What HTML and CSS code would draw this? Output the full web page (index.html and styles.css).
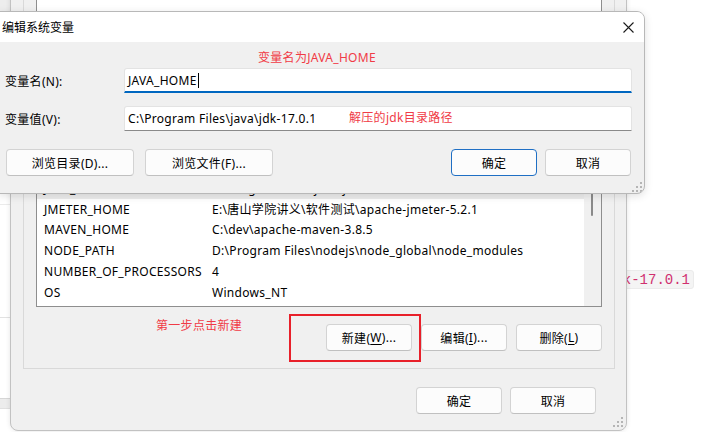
FILE: index.html
```html
<!DOCTYPE html>
<html lang="zh-CN">
<head>
<meta charset="utf-8">
<title>编辑系统变量</title>
<link rel="stylesheet" href="styles.css">
</head>
<body>
<div class="desk">
  <div class="side-win">
    <div class="sw sw-top"></div>
    <div class="sw sw-a"></div>
    <div class="sw sw-b"></div>
    <div class="sw sw-c"></div>
    <div class="sw sw-band"></div>
  </div>

  <code class="snippet">jdk-17.0.1</code>

  <div class="env-dlg">
    <div class="grp grp-user">
      <div class="lst lst-user"></div>
    </div>
    <div class="grp grp-sys">
      <div class="lst">
        <div class="rows">
          <div class="row first"></div>
          <div class="row sel"><span class="c1">JAVA_HOME</span><span class="c2">C:\Program Files\java\jdk-17.0.1</span></div>
          <div class="row"><span class="c1">JMETER_HOME</span><span class="c2">E:\唐山学院讲义\软件测试\apache-jmeter-5.2.1</span></div>
          <div class="row"><span class="c1">MAVEN_HOME</span><span class="c2">C:\dev\apache-maven-3.8.5</span></div>
          <div class="row"><span class="c1">NODE_PATH</span><span class="c2">D:\Program Files\nodejs\node_global\node_modules</span></div>
          <div class="row"><span class="c1">NUMBER_OF_PROCESSORS</span><span class="c2">4</span></div>
          <div class="row"><span class="c1">OS</span><span class="c2">Windows_NT</span></div>
        </div>
        <div class="vscroll"><div class="thumb"></div></div>
      </div>
      <div class="btnrow">
        <button class="btn btn-s">新建(<u>W</u>)...</button>
        <button class="btn btn-s">编辑(<u>I</u>)...</button>
        <button class="btn btn-s">删除(<u>L</u>)</button>
      </div>
    </div>
    <div class="footer">
      <button class="btn btn-s">确定</button>
      <button class="btn btn-s">取消</button>
    </div>
    <svg class="grip" width="10" height="10" viewBox="0 0 10 10"><g fill="#b5b5b5"><rect x="8" y="0" width="2" height="2"/><rect x="4" y="4" width="2" height="2"/><rect x="8" y="4" width="2" height="2"/><rect x="0" y="8" width="2" height="2"/><rect x="4" y="8" width="2" height="2"/><rect x="8" y="8" width="2" height="2"/></g></svg>
  </div>

  <div class="edit-dlg">
    <div class="titlebar">
      <span class="title">编辑系统变量</span>
      <svg class="close" width="11" height="11" viewBox="0 0 11 11"><path d="M0.5 0.5 L10.5 10.5 M10.5 0.5 L0.5 10.5" stroke="#1b1b1b" stroke-width="1.1" fill="none"/></svg>
    </div>
    <div class="body">
      <div class="field">
        <label class="lbl">变量名(N):</label>
        <div class="input focus"><span>JAVA_HOME</span><span class="caret"></span></div>
      </div>
      <div class="field">
        <label class="lbl">变量值(V):</label>
        <div class="input"><span>C:\Program Files\java\jdk-17.0.1</span></div>
      </div>
      <div class="actions">
        <div class="group">
          <button class="btn btn-w">浏览目录(D)...</button>
          <button class="btn btn-w">浏览文件(F)...</button>
        </div>
        <div class="group group-r">
          <button class="btn btn-s default">确定</button>
          <button class="btn btn-s">取消</button>
        </div>
      </div>
    </div>
    <svg class="grip grip-fg" width="10" height="10" viewBox="0 0 10 10"><g fill="#b5b5b5"><rect x="8" y="0" width="2" height="2"/><rect x="4" y="4" width="2" height="2"/><rect x="8" y="4" width="2" height="2"/><rect x="0" y="8" width="2" height="2"/><rect x="4" y="8" width="2" height="2"/><rect x="8" y="8" width="2" height="2"/></g></svg>
  </div>

  <div class="note note1">变量名为JAVA_HOME</div>
  <div class="note note2">解压的jdk目录路径</div>
  <div class="note note3">第一步点击新建</div>
  <div class="hl-box"></div>
</div>
</body>
</html>
```

FILE: styles.css
```css
* { box-sizing: border-box; margin: 0; padding: 0; }
html, body { width: 702px; height: 432px; overflow: hidden; background: #fff; }
body {
  font-family: "Noto Sans", "Noto Sans CJK SC", sans-serif;
  font-size: 12px;
  letter-spacing: 0.3px;
  color: #000;
}
.desk { position: relative; width: 702px; height: 432px; overflow: hidden; background: #fff; }

/* window peeking at the far left */
.side-win {
  position: absolute; left: -200px; top: 0; width: 210px; height: 432px;
  background: #fff; display: flex; flex-direction: column;
}
.sw { flex: none; border-bottom: 1px solid #dedede; }
.sw-top { height: 194px; background: #ededed; border-bottom-color: #cfcfcf; }
.sw-a { height: 11px; border-bottom-color: #ebebeb; }
.sw-b { height: 113px; border-bottom-color: #e2e2e2; }
.sw-c { height: 81px; border-bottom-color: #d6d6d6; }
.sw-band { height: 10px; background: #ececec; border-bottom-color: #e0e0e0; }

/* code snippet on the page */
.snippet {
  position: absolute; left: 602px; top: 270px; height: 19px;
  padding: 0 3px; line-height: 18px; letter-spacing: 0;
  font-family: "Liberation Mono", monospace; font-size: 14px;
  color: #d0306f; background: #f4f4f4; border: 1px solid #ebebeb; border-radius: 3px;
}

/* background dialog (环境变量) */
.env-dlg {
  position: absolute; left: 10px; top: -70px; width: 617px; height: 501px;
  background: #f0f0f0; border: 1px solid #c2c2c2; border-radius: 0 0 8px 8px;
  padding: 0 11px 0 12px;
  display: flex; flex-direction: column;
  box-shadow: 0 0 5px rgba(0,0,0,0.10);
}
.grp { flex: none; border: 1px solid #d9d9d9; }
.grp-user { height: 217px; border-top: none; padding: 0 12px; }
.lst-user { height: 205px; }
.grp-sys { margin-top: 4px; padding: 4px 12px 17px 12px; }
.lst {
  height: 150px; border: 1px solid #8e8e8e; background: #fff;
  display: flex; overflow: hidden;
}
.rows { flex: 1; display: flex; flex-direction: column; overflow: hidden; }
.row { flex: none; height: 20.75px; display: flex; align-items: center; padding-left: 7px; white-space: nowrap; }
.row.first { height: 20px; }
.row.sel { background: #ececec; }
.c1 { width: 168px; flex: none; }
.vscroll { width: 17px; flex: none; background: #f0f0f0; }
.thumb { width: 2px; height: 58px; margin-left: 7px; background: #8a8a8a; border-radius: 1px; }
.btnrow { margin-top: 17px; display: flex; justify-content: flex-end; gap: 9px; }
.footer { margin-top: 18px; display: flex; justify-content: flex-end; gap: 8px; padding-right: 19px; }

.btn {
  height: 27px; flex: none;
  border: 1px solid #d3d3d3; border-bottom-color: #c0c0c0; border-radius: 4px;
  background: #fcfcfc; color: #000;
  font-family: inherit; font-size: 12px; letter-spacing: 0.3px;
  display: flex; align-items: center; justify-content: center;
}
.btn u { text-underline-offset: 2px; }
.btn-s { width: 86px; }
.btn-w { width: 128px; }
.btn.default { border: 1px solid #1f6fc4; }

.grip { position: absolute; right: 3px; bottom: 3px; }

/* foreground dialog (编辑系统变量) */
.edit-dlg {
  position: absolute; left: -1px; top: 11px; width: 646px; height: 183px;
  background: #f0f0f0; border: 1px solid #b8b8b8; border-radius: 0 8px 8px 0;
  overflow: hidden; display: flex; flex-direction: column;
  box-shadow: 0 2px 8px rgba(0,0,0,0.12);
}
.titlebar {
  height: 30px; flex: none; background: #fff;
  display: flex; align-items: center; justify-content: space-between;
  padding: 0 10px 0 2px;
}
.title { font-size: 12px; padding-bottom: 1px; letter-spacing: 0; }
.body { padding: 26px 12px 0 0; display: flex; flex-direction: column; }
.field { display: flex; align-items: center; height: 25px; }
.field + .field { margin-top: 13px; }
.lbl { width: 124px; flex: none; padding-left: 5px; }
.input {
  flex: 1; height: 25px; background: #fff;
  border: 1px solid #e3e3e3; border-bottom-color: #8a8a8a; border-radius: 3px 3px 0 0;
  padding-left: 3px; display: flex; align-items: center;
}
.input.focus { border-bottom: 2px solid #0067c0; padding-top: 1px; }
.caret { width: 1px; height: 15px; background: #000; margin-left: 1px; }
.actions { margin-top: 18px; display: flex; justify-content: space-between; padding: 0 1px 0 6px; }
.group { display: flex; gap: 11px; }
.group-r { gap: 8px; }
.grip-fg { right: 2px; bottom: 1px; }

/* annotations */
.note { position: absolute; color: #f03b46; font-size: 12px; line-height: 16px; white-space: nowrap; }
.note1 { left: 258px; top: 50px; }
.note2 { left: 349px; top: 110px; }
.note3 { left: 156px; top: 318px; }
.hl-box { position: absolute; left: 289px; top: 314px; width: 132px; height: 48px; border: 2px solid #e8202a; }
```
